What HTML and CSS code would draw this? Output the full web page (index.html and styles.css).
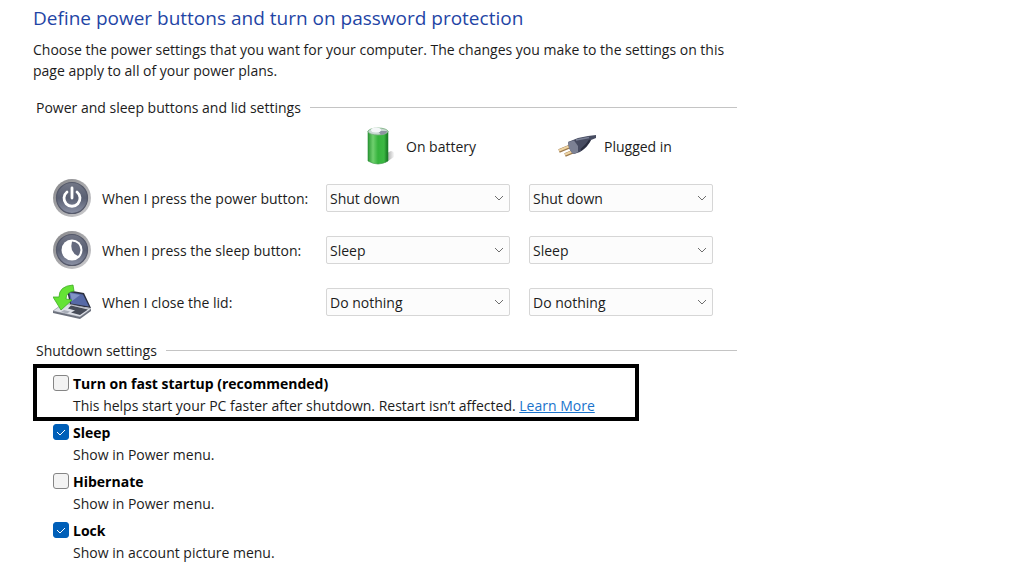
FILE: index.html
```html
<!DOCTYPE html>
<html lang="en">
<head>
  <meta charset="UTF-8">
  <meta name="viewport" content="width=device-width, initial-scale=1">
  <title>System Settings</title>
  <link rel="stylesheet" href="styles.css">
</head>
<body>

<main class="page">
  <h1>Define power buttons and turn on password protection</h1>
  <p class="intro">Choose the power settings that you want for your computer. The changes you make to the settings on this page apply to all of your power plans.</p>

  <section>
    <h2 class="section-title">Power and sleep buttons and lid settings</h2>

    <div class="power-grid">
      <div class="column-head">
        <svg class="icon" viewBox="0 0 38 38" aria-hidden="true">
          <defs>
            <linearGradient id="cell" x1="0" x2="1">
              <stop offset="0" stop-color="#2c9a35"/>
              <stop offset=".25" stop-color="#6fd06e"/>
              <stop offset=".5" stop-color="#35b33c"/>
              <stop offset=".8" stop-color="#3cb843"/>
              <stop offset="1" stop-color="#13701f"/>
            </linearGradient>
            <linearGradient id="shade" x1="0" x2="1">
              <stop offset="0" stop-color="#8d8d8d"/>
              <stop offset="1" stop-color="#ffffff"/>
            </linearGradient>
          </defs>
          <path d="M25 36 L34 30 Q36 25 31 24 L27 26 Z" fill="url(#shade)"/>
          <path d="M8 4 V34 Q18 40 28 34 V4 Z" fill="url(#cell)" stroke="#2a8e35" stroke-width=".6"/>
          <ellipse cx="18" cy="4.500" rx="10" ry="3.5" fill="#c9d8d2" stroke="#75ad7b" stroke-width=".8"/>
          <path d="M18 4 L27 4 Q27 7 21 8 Z" fill="#8d94a0"/>
          <ellipse cx="16" cy="3" rx="5" ry="2.5" fill="#f4f7f8"/>
        </svg>
        <span>On battery</span>
      </div>
      <div class="column-head">
        <svg class="icon" viewBox="0 0 38 38" aria-hidden="true">
          <path d="M1 24 L13 19" stroke="#9a784c" stroke-width="3.6"/>
          <path d="M1 23.5 L13 18.5" stroke="#efd4a2" stroke-width="2"/>
          <path d="M7 28 L19 23" stroke="#9a784c" stroke-width="3.6"/>
          <path d="M7 27.5 L19 22.5" stroke="#efd4a2" stroke-width="2"/>
          <path d="M10 15 L20 11 L30 9 L38 8 L38 11 L33 13 Q30 20 22 25 L16 27 Q11 25 10 15 Z" fill="#474c61"/>
          <path d="M10 15 L16 13.5 L20 19 L20 25 L16 27 Q11 25 10 15 Z" fill="#7c8194"/>
          <path d="M18 13 L31 10.5" stroke="#7b8196" stroke-width="1.5"/>
          <path d="M23 23 Q29 18 32 13" stroke="#292d3e" stroke-width="2" fill="none"/>
        </svg>
        <span>Plugged in</span>
      </div>

      <div class="row-label">
        <svg class="icon" viewBox="0 0 38 38" aria-hidden="true">
          <defs>
            <linearGradient id="rim" x1="0" y1="0" x2="1" y2="1">
              <stop offset="0" stop-color="#858588"/>
              <stop offset=".5" stop-color="#a8a8ab"/>
              <stop offset="1" stop-color="#d0d0d3"/>
            </linearGradient>
            <linearGradient id="face" x1="0" y1="0" x2="0" y2="1">
              <stop offset="0" stop-color="#737787"/>
              <stop offset=".5" stop-color="#5a6073"/>
              <stop offset="1" stop-color="#8b91a5"/>
            </linearGradient>
          </defs>
          <circle cx="19" cy="19" r="19" fill="url(#rim)"/>
          <circle cx="19" cy="19" r="15.5" fill="url(#face)" stroke="#55596a" stroke-width="1.2"/>
          <path d="M14 13 A8 8 0 1 0 24 13" fill="none" stroke="#fff" stroke-width="2.8" stroke-linecap="round"/>
          <path d="M19 9 V19" stroke="#fff" stroke-width="2.8" stroke-linecap="round"/>
        </svg>
        <span>When I press the power button:</span>
      </div>
      <div class="dropdown">
        <select aria-label="When I press the power button, on battery">
          <option>Do nothing</option>
          <option>Sleep</option>
          <option>Hibernate</option>
          <option selected>Shut down</option>
        </select>
        <svg class="chevron" viewBox="0 0 10 6" aria-hidden="true"><path d="M1 1 L5 5 L9 1"/></svg>
      </div>
      <div class="dropdown">
        <select aria-label="When I press the power button, plugged in">
          <option>Do nothing</option>
          <option>Sleep</option>
          <option>Hibernate</option>
          <option selected>Shut down</option>
        </select>
        <svg class="chevron" viewBox="0 0 10 6" aria-hidden="true"><path d="M1 1 L5 5 L9 1"/></svg>
      </div>

      <div class="row-label">
        <svg class="icon" viewBox="0 0 38 38" aria-hidden="true">
          <circle cx="19" cy="19" r="19" fill="url(#rim)"/>
          <circle cx="19" cy="19" r="15.5" fill="url(#face)" stroke="#55596a" stroke-width="1.2"/>
          <circle cx="19" cy="19" r="10.5" fill="#fff"/>
          <path d="M19 10.5 Q27 11 27.5 19 Q27 23 25 25 Q16 21 19 10.5 Z" fill="#646a7e"/>
        </svg>
        <span>When I press the sleep button:</span>
      </div>
      <div class="dropdown">
        <select aria-label="When I press the sleep button, on battery">
          <option>Do nothing</option>
          <option selected>Sleep</option>
          <option>Hibernate</option>
        </select>
        <svg class="chevron" viewBox="0 0 10 6" aria-hidden="true"><path d="M1 1 L5 5 L9 1"/></svg>
      </div>
      <div class="dropdown">
        <select aria-label="When I press the sleep button, plugged in">
          <option>Do nothing</option>
          <option selected>Sleep</option>
          <option>Hibernate</option>
        </select>
        <svg class="chevron" viewBox="0 0 10 6" aria-hidden="true"><path d="M1 1 L5 5 L9 1"/></svg>
      </div>

      <div class="row-label">
        <svg class="icon" viewBox="0 0 38 38" aria-hidden="true">
          <path d="M14 7 L31 10 L38 25 L17 22 Z" fill="#2c3040"/>
          <path d="M16 9 L30 11.5 L36 23.5 L18 20.5 Z" fill="#5669a6"/>
          <path d="M17 10 L27 12 L19 18 Z" fill="#8294c6"/>
          <path d="M11 20 L38 26 L27 34 L0 28 Z" fill="#dcdfe6" stroke="#9398a4" stroke-width=".7"/>
          <path d="M0 28 L27 34 L38 26 V28 L27 36 L0 30 Z" fill="#6b707c"/>
          <path d="M18 22.5 L35 26.5 L27 32 L18 29.5 L22 27.5 L15 25.5 Z" fill="#474c58"/>
          <path d="M11 27 L17 28.5 L14 30.5 L8 29 Z" fill="#a9aeb9"/>
          <path d="M20 2 Q6 3 6 14 L0 14 L8 27 L19 17 L13 16 Q13 9 21 8 Z" fill="#65e335" stroke="#3fac24" stroke-width=".8"/>
        </svg>
        <span>When I close the lid:</span>
      </div>
      <div class="dropdown">
        <select aria-label="When I close the lid, on battery">
          <option selected>Do nothing</option>
          <option>Sleep</option>
          <option>Hibernate</option>
          <option>Shut down</option>
        </select>
        <svg class="chevron" viewBox="0 0 10 6" aria-hidden="true"><path d="M1 1 L5 5 L9 1"/></svg>
      </div>
      <div class="dropdown">
        <select aria-label="When I close the lid, plugged in">
          <option selected>Do nothing</option>
          <option>Sleep</option>
          <option>Hibernate</option>
          <option>Shut down</option>
        </select>
        <svg class="chevron" viewBox="0 0 10 6" aria-hidden="true"><path d="M1 1 L5 5 L9 1"/></svg>
      </div>
    </div>
  </section>

  <section>
    <h2 class="section-title">Shutdown settings</h2>

    <div class="options">
      <div class="option highlighted">
        <span class="check">
          <input type="checkbox" id="fastStartup">
          <svg viewBox="0 0 16 16" aria-hidden="true"><path d="M4 8 L7 11 L12 6"/></svg>
        </span>
        <label for="fastStartup">Turn on fast startup (recommended)</label>
        <p>This helps start your PC faster after shutdown. Restart isn’t affected. <a href="#">Learn More</a></p>
      </div>
      <div class="option">
        <span class="check">
          <input type="checkbox" id="sleep" checked>
          <svg viewBox="0 0 16 16" aria-hidden="true"><path d="M4 8 L7 11 L12 6"/></svg>
        </span>
        <label for="sleep">Sleep</label>
        <p>Show in Power menu.</p>
      </div>
      <div class="option">
        <span class="check">
          <input type="checkbox" id="hibernate">
          <svg viewBox="0 0 16 16" aria-hidden="true"><path d="M4 8 L7 11 L12 6"/></svg>
        </span>
        <label for="hibernate">Hibernate</label>
        <p>Show in Power menu.</p>
      </div>
      <div class="option">
        <span class="check">
          <input type="checkbox" id="lock" checked>
          <svg viewBox="0 0 16 16" aria-hidden="true"><path d="M4 8 L7 11 L12 6"/></svg>
        </span>
        <label for="lock">Lock</label>
        <p>Show in account picture menu.</p>
      </div>
    </div>
  </section>
</main>

</body>
</html>
```
FILE: styles.css
```css
* {
  box-sizing: border-box;
}

body {
  margin: 0;
  background: #ffffff;
  color: #1c1c1c;
  font-family: 'Segoe UI', 'Open Sans', sans-serif;
  font-size: 14px;
  line-height: 21px;
}

.page {
  max-width: 737px;
  padding: 4px 0 8px 33px;
}

h1 {
  margin: 0 0 7px;
  color: #1f45a5;
  font-size: 19px;
  font-weight: 400;
  line-height: 28px;
}

.intro {
  margin: 0 0 16px;
}

.section-title {
  display: flex;
  align-items: center;
  gap: 9px;
  margin: 0;
  padding-left: 3px;
  font-size: 14px;
  font-weight: 400;
}

.section-title::after {
  content: "";
  flex: 1;
  height: 1px;
  background: #c4c4c4;
}

/* Power button table */
.power-grid {
  display: grid;
  grid-template-columns: minmax(0, 1fr) 184px 184px;
  column-gap: 19px;
  grid-auto-rows: 52px;
  align-items: center;
  padding: 2px 24px 12px 20px;
}

.column-head {
  display: flex;
  align-items: center;
  gap: 8px;
  padding-left: 34px;
}

.column-head:first-child {
  grid-column: 2;
}

.column-head + .column-head {
  padding-left: 29px;
}

.row-label {
  display: flex;
  align-items: center;
  gap: 11px;
  white-space: nowrap;
}

.icon {
  flex: none;
  width: 38px;
  height: 38px;
}

.dropdown {
  position: relative;
}

select {
  display: block;
  width: 100%;
  height: 28px;
  padding: 0 24px 0 3px;
  appearance: none;
  background: #fcfcfc;
  border: 1px solid #d6d6d6;
  border-radius: 2px;
  color: #1c1c1c;
  font: inherit;
}

.chevron {
  position: absolute;
  top: 11px;
  right: 6px;
  width: 10px;
  height: 6px;
  fill: none;
  stroke: #6e6e6e;
  pointer-events: none;
}

/* Shutdown options */
.options {
  padding: 7px 102px 0 4px;
}

.option {
  display: grid;
  grid-template-columns: 16px 1fr;
  column-gap: 4px;
  grid-auto-rows: 22px;
  align-items: center;
  padding: 4px 0 1px 16px;
}

.option.highlighted {
  outline: 4px solid #000000;
}

.option label {
  justify-self: start;
  color: #000000;
  font-weight: 700;
}

.option p {
  grid-column: 2;
  margin: 0;
}

.option a {
  color: #1a73cc;
}

.check {
  position: relative;
  height: 16px;
}

.check input {
  display: block;
  width: 16px;
  height: 16px;
  margin: 0;
  appearance: none;
  background: #f3f3f3;
  border: 1px solid #858585;
  border-radius: 3px;
}

.check input:checked {
  background: #005fb8;
  border-color: #005fb8;
}

.check svg {
  position: absolute;
  top: 0;
  left: 0;
  width: 16px;
  height: 16px;
  fill: none;
  stroke: #ffffff;
  pointer-events: none;
  visibility: hidden;
}

.check input:checked + svg {
  visibility: visible;
}
```
